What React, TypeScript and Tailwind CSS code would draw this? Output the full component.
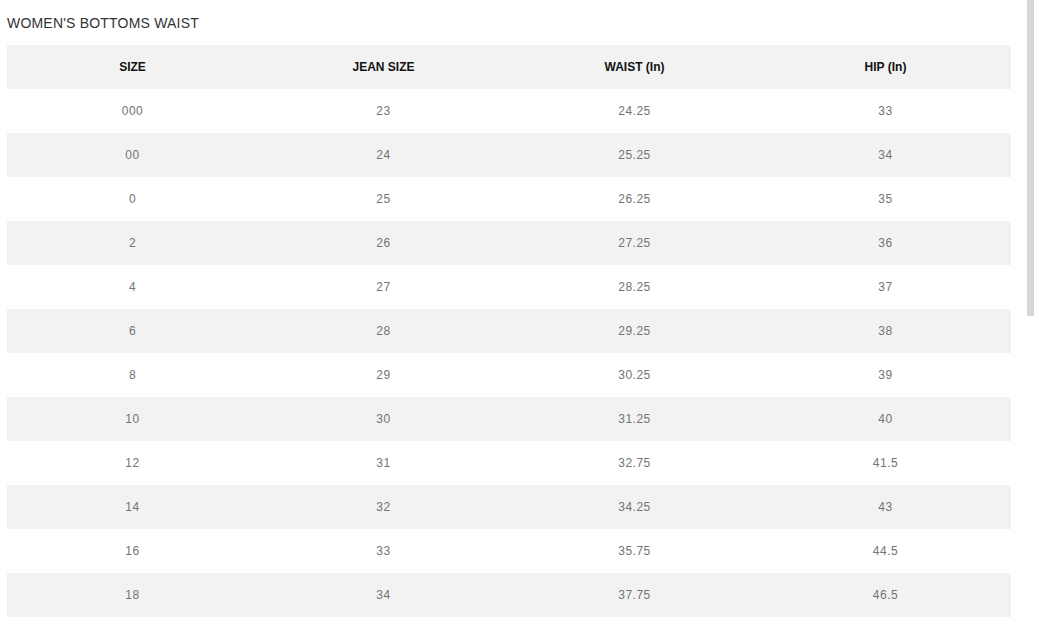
const rows = [
  ["000", "23", "24.25", "33"],
  ["00", "24", "25.25", "34"],
  ["0", "25", "26.25", "35"],
  ["2", "26", "27.25", "36"],
  ["4", "27", "28.25", "37"],
  ["6", "28", "29.25", "38"],
  ["8", "29", "30.25", "39"],
  ["10", "30", "31.25", "40"],
  ["12", "31", "32.75", "41.5"],
  ["14", "32", "34.25", "43"],
  ["16", "33", "35.75", "44.5"],
  ["18", "34", "37.75", "46.5"],
];

const headers = ["SIZE", "JEAN SIZE", "WAIST (In)", "HIP (In)"];

export default function App() {
  return (
    <div className="relative w-[1039px] h-[627px] overflow-hidden bg-white font-['Liberation_Sans',Arial,sans-serif]">
      <div className="pl-[7px] w-[1011px]">
        <h2 className="h-[45px] pt-[15px] text-[14px] leading-[17px] tracking-[0.2px] text-[#333]">WOMEN'S BOTTOMS WAIST</h2>
        <div className="grid grid-cols-4 h-[44px] items-center bg-[#f2f2f2]">
          {headers.map((h) => (
            <div key={h} className="text-center text-[12px] font-bold text-[#111]">
              {h}
            </div>
          ))}
        </div>
        {rows.map((r, i) => (
          <div
            key={r[0]}
            className={
              i % 2 === 1
                ? "grid grid-cols-4 h-[44px] items-center bg-[#f2f2f2]"
                : "grid grid-cols-4 h-[44px] items-center bg-white"
            }
          >
            {r.map((c, j) => (
              <div key={j} className="text-center text-[12px] tracking-[0.5px] text-[#737373]">
                {c}
              </div>
            ))}
          </div>
        ))}
      </div>
      {/* scrollbar */}
      <div className="absolute top-0 right-[5px] w-[7px] h-[316px] bg-[#d6d6d6]" />
    </div>
  );
}
